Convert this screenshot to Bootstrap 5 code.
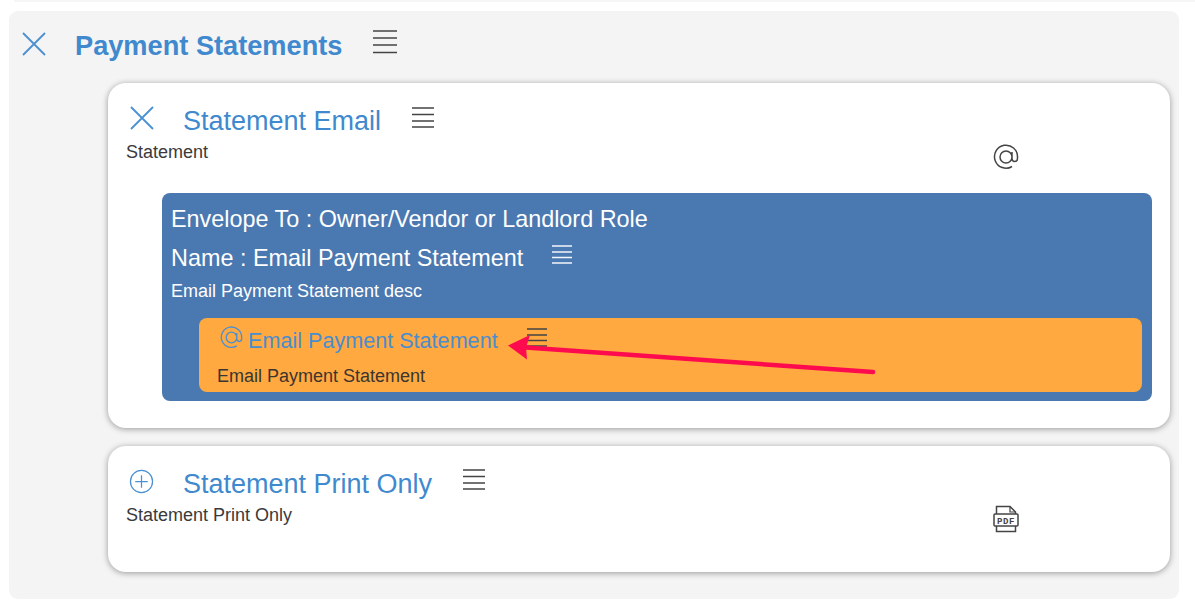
<!DOCTYPE html>
<html lang="en">
<head>
<meta charset="utf-8">
<title>Payment Statements</title>
<link rel="stylesheet" href="https://cdn.jsdelivr.net/npm/bootstrap@5.3.0/dist/css/bootstrap.min.css">
<style>
html,body{height:608px;overflow:hidden;background:#fff;font-family:"Liberation Sans",Arial,sans-serif;color:#3a3a3a}
body{position:relative}
.topsliver{height:2px;margin-left:14px;background:#f6f6f6}
.stage{height:606px;padding:9px 16px 0 9px}
.panel{height:588px;background:#f4f4f4;border-radius:9px;padding:18px 9px 0 13px}
.glyph{display:block;flex:none}
.ico-blue{stroke:#4a90d2;fill:none}
.ico-dark{stroke:#444;fill:none}
.ico-light{stroke:#f2f5fa;fill:none}
.head-main{height:32px}
.title-main{font-size:27.2px;line-height:32px;font-weight:700;color:#4089ce;margin:1px 0 0 29px;white-space:nowrap}
.title-sub{font-size:27px;line-height:32px;font-weight:400;color:#4089ce;margin:1px 0 0 29px;white-space:nowrap}
.cards{margin:22px 0 0 86px}
.sheet{background:#fff;border-radius:18px;box-shadow:0 1px 6px rgba(0,0,0,.38);padding:21px 18px 0 18px}
.sheet-a{height:345px;margin-bottom:18px}
.sheet-b{height:126px}
.desc{font-size:18px;line-height:20px;color:#3a3a3a;margin:5px 0 0;width:0;white-space:nowrap}
.desc-row{height:35px}
.envelope{margin:21px 0 0 36px;height:208px;background:#4a78b1;border-radius:8px;color:#fff;padding:10px 10px 0 9px}
.env-line{font-size:23.4px;line-height:32px;margin:0;color:#fff;white-space:nowrap}
.env-row{margin-top:7px;height:32px}
.env-desc{font-size:18px;line-height:20px;margin:7px 0 0;color:#fff}
.leaf{margin:17px 0 0 28px;height:74px;background:#ffa940;border-radius:8px;padding:8px 0 0 18px}
.leaf-title{font-size:21.6px;line-height:30px;color:#4a8dcf;margin:0 0 0 5px;white-space:nowrap}
.leaf-desc{font-size:18px;line-height:20px;margin:10px 0 0;color:#3b3530}
.arrow{position:absolute;left:0;top:0;pointer-events:none}
</style>
</head>
<body>
<div class="topsliver"></div>
<div class="stage">
  <div class="panel">
    <div class="d-flex align-items-start head-main">
      <svg class="glyph ico-blue" width="24" height="24" viewBox="0 0 24 24" style="margin-top:3px" stroke-width="1.8"><path d="M1 1 23 23M23 1 1 23"/></svg>
      <h1 class="title-main">Payment Statements</h1>
      <svg class="glyph ico-dark" width="24" height="24" viewBox="0 0 24 24" style="margin:1px 0 0 31px" stroke-width="1.4"><path d="M0 1h24M0 8h24M0 15h24M0 22.500h24"/></svg>
    </div>
    <div class="cards">
      <section class="sheet sheet-a">
        <div class="d-flex align-items-start">
          <svg class="glyph ico-blue" width="24" height="24" viewBox="0 0 24 24" style="margin-left:4px;margin-top:2px" stroke-width="1.8"><path d="M1 1 23 23M23 1 1 23"/></svg>
          <h2 class="title-sub">Statement Email</h2>
          <svg class="glyph ico-dark" width="22" height="21" viewBox="0 0 22 21" style="margin:3px 0 0 31px" stroke-width="1.4"><path d="M0 1h22M0 7.500h22M0 14h22M0 20h22"/></svg>
        </div>
        <div class="d-flex align-items-start desc-row">
          <p class="desc">Statement</p>
          <svg class="glyph ico-dark" width="26" height="26" viewBox="0 0 26 26" style="margin:7px 0 0 867px" stroke-width="1.5"><path d="M19 22.500A11.500 11.500 0 1 1 24.500 13v1.500c0 4-5.500 4-5.500 0V8M19 13a6 6 0 1 1-12 0 6 6 0 0 1 12 0Z"/></svg>
        </div>
        <div class="envelope">
          <p class="env-line">Envelope To : Owner/Vendor or Landlord Role</p>
          <div class="d-flex align-items-start env-row">
            <p class="env-line">Name : Email Payment Statement</p>
            <svg class="glyph ico-light" width="20" height="19" viewBox="0 0 20 19" style="margin:3px 0 0 29px" stroke-width="1.3"><path d="M0 1h20M0 7h20M0 12.500h20M0 18h20"/></svg>
          </div>
          <p class="env-desc">Email Payment Statement desc</p>
          <div class="leaf">
            <div class="d-flex align-items-start">
              <svg class="glyph ico-blue" width="23" height="23" viewBox="0 0 26 26" style="margin:0 0 0 3px" stroke-width="1.500"><path d="M19 22.500A11.500 11.500 0 1 1 24.500 13v1.500c0 4-5.500 4-5.500 0V8M19 13a6 6 0 1 1-12 0 6 6 0 0 1 12 0Z"/></svg>
              <h3 class="leaf-title">Email Payment Statement</h3>
              <svg class="glyph ico-dark" width="20" height="19" viewBox="0 0 20 19" style="margin:2px 0 0 29px" stroke-width="1.3"><path d="M0 1h20M0 7h20M0 12.500h20M0 18h20"/></svg>
            </div>
            <p class="leaf-desc">Email Payment Statement</p>
          </div>
        </div>
      </section>
      <section class="sheet sheet-b">
        <div class="d-flex align-items-start">
          <svg class="glyph ico-blue" width="25" height="25" viewBox="0 0 26 26" style="margin-left:3px;margin-top:2px" stroke-width="1.300"><circle cx="13" cy="13" r="11.500"/><path d="M13 6.500v13M6.500 13h13"/></svg>
          <h2 class="title-sub">Statement Print Only</h2>
          <svg class="glyph ico-dark" width="22" height="21" viewBox="0 0 22 21" style="margin:2px 0 0 31px" stroke-width="1.4"><path d="M0 1h22M0 7.500h22M0 14h22M0 20h22"/></svg>
        </div>
        <div class="d-flex align-items-start desc-row">
          <p class="desc">Statement Print Only</p>
          <svg class="glyph" width="26" height="28" viewBox="0 0 26 28" style="margin:5px 0 0 867px" fill="none" stroke="#444" stroke-width="1.500">
            <path d="M3.500 9V1.500H17L22.500 7v2M3.500 21v5.500h19V21"/><path d="M17 1.500V7h5.500" stroke-width="1.200"/><rect x="1" y="9" width="24" height="12" rx="1"/>
            <text x="13" y="18.500" text-anchor="middle" font-family="Liberation Mono,monospace" font-size="9" font-weight="700" letter-spacing=".6" fill="#444" stroke="none">PDF</text>
          </svg>
        </div>
      </section>
    </div>
  </div>
</div>
<svg class="arrow" width="1195" height="608" viewBox="0 0 1195 608">
  <path d="M873 372 526 347.500" stroke="#fe0a4e" stroke-width="4.500" stroke-linecap="round" fill="none"/>
  <path d="M508 345.500 530 335 526 347.500 527 359.500Z" fill="#fe0a4e"/>
</svg>
<script src="https://cdn.jsdelivr.net/npm/bootstrap@5.3.0/dist/js/bootstrap.bundle.min.js"></script>
</body>
</html>
